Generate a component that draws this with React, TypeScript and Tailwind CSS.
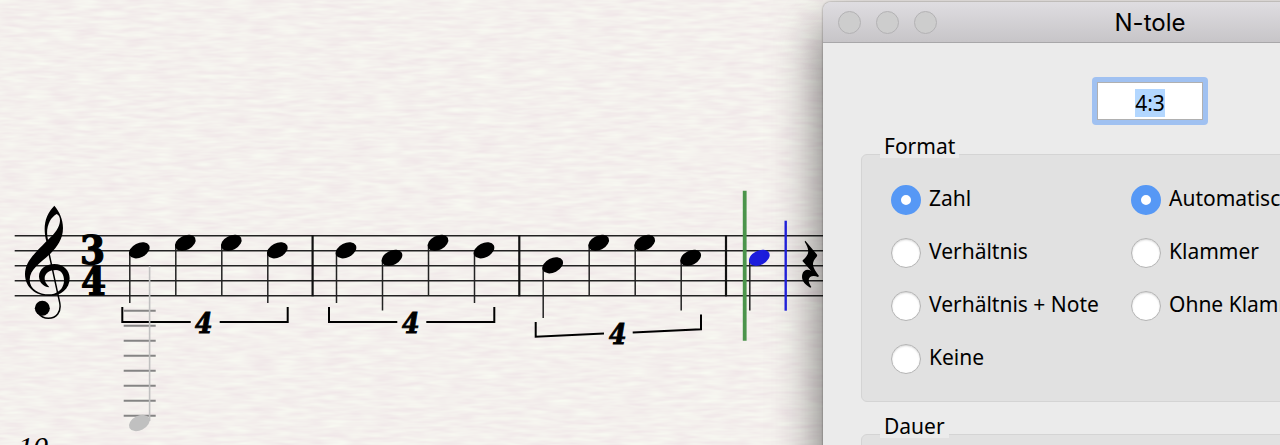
import React, { useEffect, useRef, useState } from 'react';

interface Note {
  x: number;
  y: number;
  stem: number;
  color?: string;
}

interface RadioOptionProps {
  name: string;
  label: string;
  checked: boolean;
  onChange: () => void;
}

interface GroupBoxProps {
  title: string;
  children?: React.ReactNode;
}

const STAFF_LINES = [235.8, 250.8, 265.8, 280.8, 295.8];
const BARLINES = [312.6, 519.3, 726];
const LEDGER_LINES = [310.7, 325.7, 340.7, 355.7, 370.8, 385.8, 400.8, 415.8];

const NOTES: Note[] = [
  { x: 139.3, y: 250.3, stem: 303 },
  { x: 185.3, y: 242.8, stem: 296 },
  { x: 231.3, y: 242.8, stem: 296 },
  { x: 277.3, y: 250.3, stem: 303 },
  { x: 346, y: 250.3, stem: 303 },
  { x: 392, y: 257.8, stem: 310.5 },
  { x: 438, y: 242.8, stem: 296 },
  { x: 484, y: 250.3, stem: 303 },
  { x: 552.7, y: 265.3, stem: 318 },
  { x: 598.7, y: 242.8, stem: 296 },
  { x: 644.7, y: 242.8, stem: 296 },
  { x: 690.7, y: 257.8, stem: 310.5 },
  { x: 759.3, y: 257.8, stem: 310.5, color: '#1c1cdc' },
];

const TUPLETS = [
  { path: 'M122.3 307V322H190.7M219.7 322H287.7V307', x: 195, y: 333 },
  { path: 'M329 307V322H397.3M426.3 322H494.3V307', x: 402, y: 333 },
  { path: 'M535.7 322V336.8L604 333.6M632.7 332.6L701 329.2V314.5', x: 609, y: 344 },
];

const NoteHead: React.FC<{ x: number; y: number; fill: string }> = ({ x, y, fill }) => (
  <ellipse rx="11" ry="7.2" fill={fill} transform={`translate(${x} ${y}) rotate(-27)`} />
);

const Score: React.FC = () => (
  <svg
    width="823"
    height="445"
    viewBox="0 0 823 445"
    className="block max-w-none"
    role="img"
    aria-label="3/4"
  >
    <defs>
      <filter id="paper" x="0" y="0" width="100%" height="100%" colorInterpolationFilters="sRGB">
        <feTurbulence type="fractalNoise" baseFrequency="0.04 0.24" numOctaves="2" seed="4" />
        <feColorMatrix
          values="0.04 0 0 0 0.936
                  0.1 0 0 0 0.89
                  0.05 0 0 0 0.904
                  0 0 0 0 1"
        />
      </filter>
    </defs>
    <rect width="823" height="445" filter="url(#paper)" />

    {/* Staff */}
    <g stroke="#222" strokeWidth="1.5">
      {STAFF_LINES.map((y) => (
        <line key={y} x1="14.7" x2="823" y1={y} y2={y} />
      ))}
    </g>
    <g stroke="#111" strokeWidth="2.2">
      {BARLINES.map((x) => (
        <line key={x} x1={x} x2={x} y1="235.3" y2="296.3" />
      ))}
    </g>

    {/* Treble clef */}
    <g transform="translate(10 195) scale(0.3333)">
      <path
        fillRule="evenodd"
        d="M133 32C148 50 159 72 159 99C159 132 142 155 121 176C90 205 60 222 59 254C59 282 86 298 118 298C122 298 127 297 132 296C151 290 162 276 162 256C162 237 152 225 138 225C118 225 104 235 104 250C104 263 113 270 118 277C99 276 87 261 87 244C87 223 107 207 133 207C160 207 179 226 179 250C179 282 153 303 118 303C76 303 45 276 45 238C45 199 76 174 109 139C97 94 107 58 133 32ZM140 57C120 68 105 98 114 134C136 115 149 96 150 77C150 67 147 60 140 57Z"
      />
      <path d="M115 166L149 322C155 352 139 370 115 370C101 370 92 364 85 354" fill="none" stroke="#000" strokeWidth="4.5" />
      <circle cx="97" cy="340" r="22.5" />
    </g>

    {/* Time signature */}
    <g
      stroke="#000"
      strokeWidth="1.2"
      className="font-['DejaVu_Serif_Condensed','DejaVu_Serif',serif] text-[40px] font-bold"
    >
      <text x="80" y="264">3</text>
      <text x="81" y="295">4</text>
    </g>

    {NOTES.map((note) => (
      <g key={note.x}>
        <line x1={note.x - 9.5} x2={note.x - 9.5} y1={note.y + 2} y2={note.stem} stroke="#222" strokeWidth="1.5" />
        <NoteHead x={note.x} y={note.y} fill={note.color ?? '#000'} />
      </g>
    ))}

    {TUPLETS.map((tuplet) => (
      <g key={tuplet.x}>
        <path d={tuplet.path} fill="none" stroke="#000" strokeWidth="2" />
        <text
          x={tuplet.x}
          y={tuplet.y}
          stroke="#000"
          strokeWidth="0.8"
          className="font-['DejaVu_Serif_Condensed','DejaVu_Serif',serif] text-[28px] font-bold italic"
        >
          4
        </text>
      </g>
    ))}

    {/* Input shadow note */}
    <g stroke="#858484" strokeWidth="2">
      {LEDGER_LINES.map((y) => (
        <line key={y} x1="123.7" x2="155.7" y1={y} y2={y} />
      ))}
    </g>
    <line x1="149.6" x2="149.6" y1="266" y2="421" stroke="#c0c0c0" strokeWidth="1.6" />
    <NoteHead x={139.3} y={423} fill="#c0c0c0" />

    {/* Playback line and cursor */}
    <line x1="744.7" x2="744.7" y1="190.7" y2="340.7" stroke="#4b944b" strokeWidth="3.8" />
    <line x1="785.7" x2="785.7" y1="220.7" y2="310.7" stroke="#2222e0" strokeWidth="2.4" />

    {/* Quarter rest */}
    <path
      transform="translate(720 185) scale(0.3333)"
      d="M256 167L290 208Q293 211 290 215C273 234 276 245 297 273L294 276C276 267 254 277 274 306L271 308C252 298 243 284 247 268C250 255 262 251 273 257L248 229Q247 227 249 225C268 207 270 197 254 170Z"
    />

    <text x="18" y="457" className="font-['Liberation_Serif',serif] text-[30px] italic">
      10
    </text>
  </svg>
);

const RadioOption: React.FC<RadioOptionProps> = ({ name, label, checked, onChange }) => (
  <label className="flex h-[30px] items-center gap-2 whitespace-nowrap">
    <input
      type="radio"
      name={name}
      checked={checked}
      onChange={onChange}
      className="size-[30px] shrink-0 appearance-none rounded-full border border-[#b4b4b4] bg-white shadow-[inset_0_1px_2px_rgba(0,0,0,0.18)] checked:border-[10px] checked:border-[#5698f5] checked:shadow-none"
    />
    <span className="pb-1">{label}</span>
  </label>
);

const GroupBox: React.FC<GroupBoxProps> = ({ title, children }) => (
  <fieldset>
    <legend className="relative ml-[19px] bg-[#ebebeb] px-1 leading-[24px]">{title}</legend>
    <div className="-mt-1 h-[248px] rounded-md border border-[#d4d4d4] bg-[#e1e1e1] px-[29px] pt-[30px]">
      {children}
    </div>
  </fieldset>
);

const NUMBER_OPTIONS = ['Zahl', 'Verhältnis', 'Verhältnis + Note', 'Keine'];
const BRACKET_OPTIONS = ['Automatische Klammer', 'Klammer', 'Ohne Klammer'];

const TupletDialog: React.FC = () => {
  const [ratio, setRatio] = useState('4:3');
  const [numberType, setNumberType] = useState('Zahl');
  const [bracketType, setBracketType] = useState('Automatische Klammer');
  const ratioRef = useRef<HTMLInputElement>(null);

  useEffect(() => {
    ratioRef.current?.focus();
    ratioRef.current?.select();
  }, []);

  return (
    <section className="w-[654px] rounded-t-lg bg-[#ebebeb] font-['Noto_Sans',sans-serif] text-[21px] leading-[28px] text-black shadow-[0_24px_50px_rgba(0,0,0,0.6),0_0_2px_rgba(0,0,0,0.5)]">
      <header className="grid h-[41px] grid-cols-[1fr_auto_1fr] items-center rounded-t-lg border-b border-[#a8a7a9] bg-linear-to-b from-[#dfdde1] to-[#c7c5c8] px-[15px]">
        <div className="flex gap-[15px]">
          <button type="button" aria-label="Schließen" className="size-[23px] rounded-full border border-[#b3b2b4] bg-[#cdcdcd]" />
          <button type="button" aria-label="Minimieren" className="size-[23px] rounded-full border border-[#b3b2b4] bg-[#cdcdcd]" />
          <button type="button" aria-label="Zoomen" className="size-[23px] rounded-full border border-[#b3b2b4] bg-[#cdcdcd]" />
        </div>
        <h1 className="pt-[2px] font-['Inter',sans-serif] text-[24px]">N-tole</h1>
      </header>

      <div className="flex flex-col px-[38px] pt-[34px] pb-10">
        <div className="self-center rounded-sm bg-[#a0c1f1] p-[5px]">
          <input
            ref={ratioRef}
            type="text"
            aria-label="N-tole"
            value={ratio}
            onChange={(e) => setRatio(e.target.value)}
            className="block h-[38px] w-[106px] border border-[#b0b0b0] bg-white pt-1 text-center leading-[24px] outline-none selection:bg-[#b3d7ff] selection:text-black"
          />
        </div>

        <div className="mt-[9px] flex flex-col gap-3">
          <GroupBox title="Format">
            <div className="grid grid-cols-[240px_1fr]">
              <div className="flex flex-col gap-[23px]">
                {NUMBER_OPTIONS.map((option) => (
                  <RadioOption
                    key={option}
                    name="number"
                    label={option}
                    checked={numberType === option}
                    onChange={() => setNumberType(option)}
                  />
                ))}
              </div>
              <div className="flex flex-col gap-[23px]">
                {BRACKET_OPTIONS.map((option) => (
                  <RadioOption
                    key={option}
                    name="bracket"
                    label={option}
                    checked={bracketType === option}
                    onChange={() => setBracketType(option)}
                  />
                ))}
              </div>
            </div>
          </GroupBox>

          <GroupBox title="Dauer" />
        </div>
      </div>
    </section>
  );
};

export default function App() {
  return (
    <main className="flex h-screen overflow-hidden bg-[#f4f0ed]">
      <div className="min-w-0 flex-1 overflow-hidden">
        <Score />
      </div>
      <div className="relative w-[457px] shrink-0 pt-[2px]">
        <TupletDialog />
      </div>
    </main>
  );
}
